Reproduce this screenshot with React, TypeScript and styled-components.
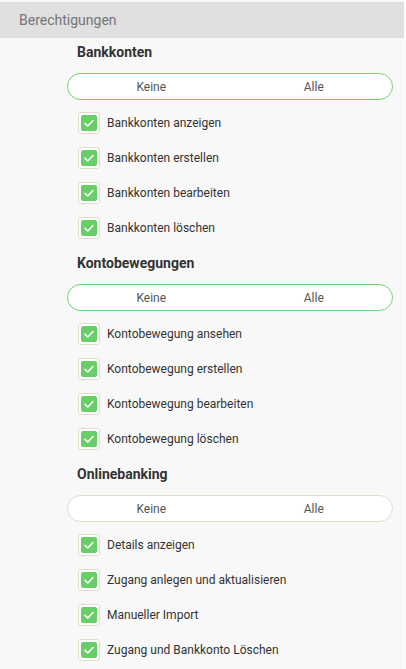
import React from 'react';
import styled, { createGlobalStyle } from 'styled-components';

const GlobalStyle = createGlobalStyle`
    html, body {
        margin: 0;
        padding: 0;
        background: #f8f8f8;
    }
    body {
        font-family: Roboto, 'Liberation Sans', sans-serif;
    }
`;

const Panel = styled.div`
    width: 405px;
    height: 669px;
    padding-top: 2px;
    box-sizing: border-box;
    background: #f8f8f8;
    border-right: 1px solid #fdfdfd;
    overflow: hidden;
`;

const PanelHeader = styled.div`
    height: 36px;
    display: flex;
    align-items: center;
    padding-left: 19px;
    background: #e0e0e0;
    color: #757575;
    font-size: 14px;
`;

const Body = styled.div`
    padding: 0 11px 0 67px;
`;

const Section = styled.section`
    display: flex;
    flex-direction: column;
    margin-bottom: 4px;
`;

const SectionTitle = styled.h3`
    margin: 0;
    height: 28px;
    line-height: 28px;
    padding-left: 10px;
    font-size: 14px;
    font-weight: 700;
    color: #333;
`;

const Toggle = styled.div<{ $active?: boolean }>`
    margin-top: 7px;
    height: 27px;
    box-sizing: border-box;
    padding-left: 5px;
    display: grid;
    grid-template-columns: 1fr 1fr;
    column-gap: 6px;
    border: 1px solid ${(p) => (p.$active ? '#6fd26f' : '#e2dcc8')};
    border-radius: 14px;
    background: #fff;
`;

const ToggleOption = styled.button`
    border: none;
    background: none;
    padding: 0;
    font: inherit;
    font-size: 12px;
    color: #555;
    cursor: pointer;
`;

const List = styled.ul`
    list-style: none;
    margin: 5px 0 0;
    padding: 0 0 0 11px;
`;

const Row = styled.li`
    height: 35px;
    display: flex;
    align-items: center;
    gap: 7px;
    font-size: 12px;
    color: #333;
`;

const Box = styled.span`
    width: 22px;
    height: 22px;
    box-sizing: border-box;
    border: 1px solid #e2dcc8;
    border-radius: 3px;
    background: #fff;
    display: flex;
    align-items: center;
    justify-content: center;
`;

const Tick = styled.span`
    width: 16px;
    height: 16px;
    border-radius: 2px;
    background: #68ce68;
    display: flex;
    align-items: center;
    justify-content: center;
`;

const Check = () => (
    <Box>
        <Tick>
            <svg width="12" height="12" viewBox="0 0 12 12">
                <path d="M2 6.3 L4.8 9 L10 3.5" fill="none" stroke="#fff" strokeWidth="1.6" strokeLinecap="round" strokeLinejoin="round" />
            </svg>
        </Tick>
    </Box>
);

const sections = [
    {
        title: 'Bankkonten',
        active: true,
        items: ['Bankkonten anzeigen', 'Bankkonten erstellen', 'Bankkonten bearbeiten', 'Bankkonten löschen'],
    },
    {
        title: 'Kontobewegungen',
        active: true,
        items: ['Kontobewegung ansehen', 'Kontobewegung erstellen', 'Kontobewegung bearbeiten', 'Kontobewegung löschen'],
    },
    {
        title: 'Onlinebanking',
        active: false,
        items: ['Details anzeigen', 'Zugang anlegen und aktualisieren', 'Manueller Import', 'Zugang und Bankkonto Löschen'],
    },
];

export default function App() {
    return (
        <>
            <GlobalStyle />
            <Panel>
                <PanelHeader>Berechtigungen</PanelHeader>
                <Body>
                    {sections.map((s) => (
                        <Section key={s.title}>
                            <SectionTitle>{s.title}</SectionTitle>
                            <Toggle $active={s.active}>
                                <ToggleOption>Keine</ToggleOption>
                                <ToggleOption>Alle</ToggleOption>
                            </Toggle>
                            <List>
                                {s.items.map((item) => (
                                    <Row key={item}>
                                        <Check />
                                        {item}
                                    </Row>
                                ))}
                            </List>
                        </Section>
                    ))}
                </Body>
            </Panel>
        </>
    );
}
